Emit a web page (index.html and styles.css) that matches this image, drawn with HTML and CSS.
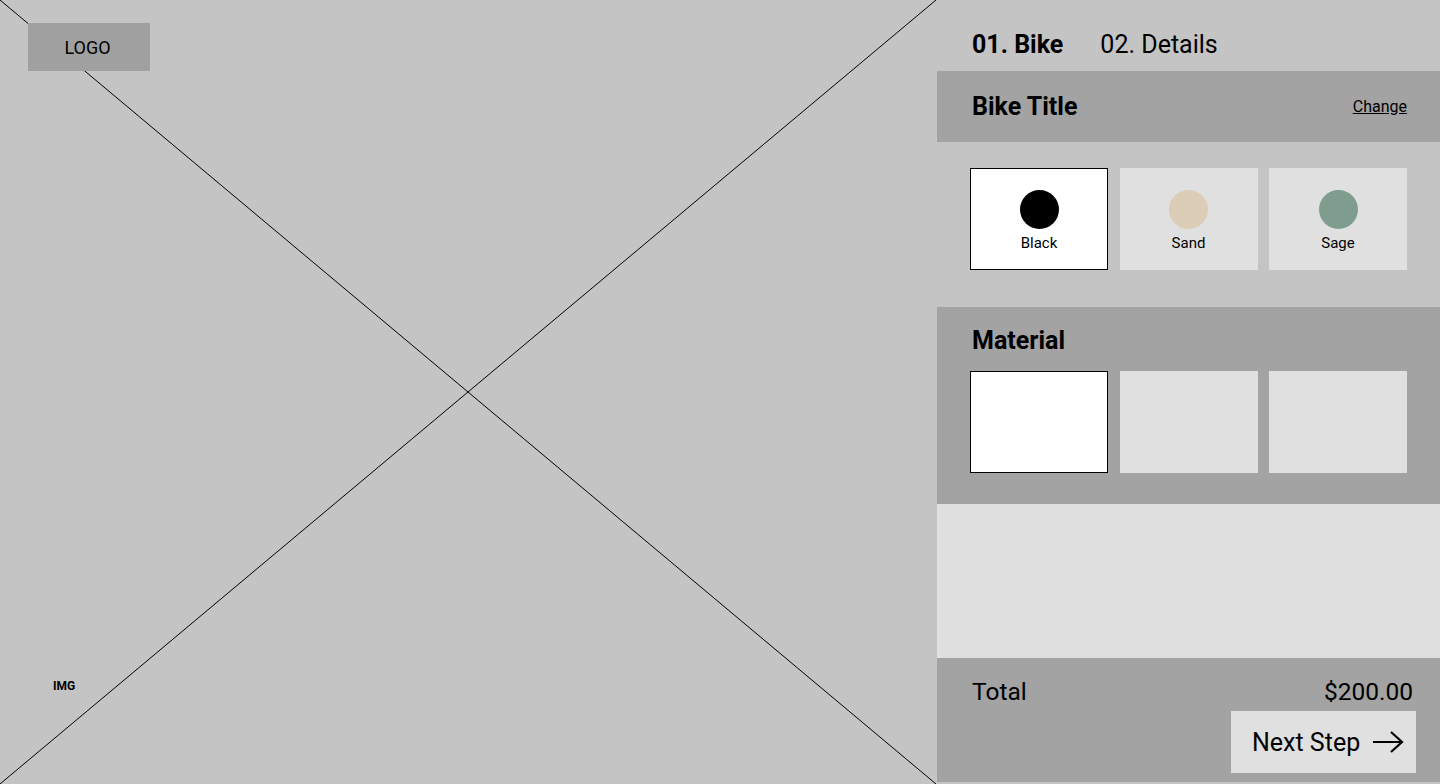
FILE: index.html
```html
<!DOCTYPE html>
<html lang="en">
<head>
    <meta charset="UTF-8">
    <meta name="viewport" content="width=device-width, initial-scale=1.0">
    <title>Bike Configurator</title>
    <link rel="stylesheet" href="styles.css">
</head>
<body>
    <div class="hero">
        <svg class="hero-cross" viewBox="0 0 936 784" preserveAspectRatio="none">
            <line x1="0" y1="0" x2="936" y2="784" stroke="#000" stroke-width="1"/>
            <line x1="936" y1="0" x2="0" y2="784" stroke="#000" stroke-width="1"/>
        </svg>
        <div class="logo">LOGO</div>
        <span class="img-label">IMG</span>
    </div>

    <aside class="panel">
        <nav class="steps">
            <span class="step active">01. Bike</span>
            <span class="step">02. Details</span>
        </nav>

        <div class="bike-title">
            <h2>Bike Title</h2>
            <a href="#" class="change">Change</a>
        </div>

        <div class="colors">
            <div class="option selected">
                <span class="dot" style="background:#000"></span>
                <span class="option-name">Black</span>
            </div>
            <div class="option">
                <span class="dot" style="background:#dbcdb6"></span>
                <span class="option-name">Sand</span>
            </div>
            <div class="option">
                <span class="dot" style="background:#7e9d8f"></span>
                <span class="option-name">Sage</span>
            </div>
        </div>

        <div class="material">
            <h2>Material</h2>
            <div class="options">
                <div class="option selected"></div>
                <div class="option"></div>
                <div class="option"></div>
            </div>
        </div>

        <div class="spacer"></div>

        <div class="summary">
            <div class="total">
                <span>Total</span>
                <span>$200.00</span>
            </div>
            <button class="next">
                Next Step
                <svg width="32" height="24" viewBox="0 0 32 24">
                    <path d="M1 12H30M19 2L30 12L19 22" fill="none" stroke="#000" stroke-width="2.2"/>
                </svg>
            </button>
        </div>
    </aside>
</body>
</html>
```

FILE: styles.css
```css
body {
    margin: 0;
    padding: 0;
    height: 784px;
    display: flex;
    background-color: #c4c4c4;
    overflow: hidden;
    font-family: Roboto, 'Liberation Sans', sans-serif;
    color: #000;
}
.hero {
    position: relative;
    width: 936px;
    height: 784px;
    flex-shrink: 0;
}
.hero-cross {
    position: absolute;
    left: 0;
    top: 0;
    width: 100%;
    height: 100%;
}
.logo {
    position: absolute;
    left: 28px;
    top: 23px;
    width: 122px;
    height: 48px;
    background-color: #a0a0a0;
    display: flex;
    justify-content: center;
    align-items: center;
    padding-right: 3px;
    box-sizing: border-box;
    font-size: 18px;
}
.img-label {
    position: absolute;
    left: 53px;
    top: 679px;
    font-size: 12px;
    font-weight: 700;
}
.panel {
    width: 503px;
    margin-left: 1px;
    display: flex;
    flex-direction: column;
    height: 782px;
}
.steps {
    height: 71px;
    display: flex;
    align-items: center;
    gap: 37px;
    padding: 17px 0 0 35px;
    box-sizing: border-box;
    font-size: 25px;
}
.step.active {
    font-weight: 700;
}
.bike-title {
    height: 71px;
    background-color: #a3a3a3;
    display: flex;
    justify-content: space-between;
    align-items: center;
    padding: 0 33px 0 35px;
}
h2 {
    margin: 0;
    font-size: 25px;
    font-weight: 700;
}
.change {
    color: #000;
    font-size: 16px;
}
.colors {
    height: 165px;
    box-sizing: border-box;
    padding: 26px 0 0 33px;
    display: flex;
    gap: 11.5px;
}
.option {
    width: 138px;
    height: 102px;
    box-sizing: border-box;
    background-color: #e0e0e0;
    display: flex;
    flex-direction: column;
    align-items: center;
    padding-top: 22px;
}
.option.selected {
    background-color: #fff;
    border: 1px solid #000;
    padding-top: 21px;
}
.dot {
    width: 39px;
    height: 39px;
    border-radius: 50%;
}
.option-name {
    margin-top: 5px;
    font-size: 15px;
}
.material {
    height: 197px;
    box-sizing: border-box;
    background-color: #a3a3a3;
    padding: 19px 0 0 35px;
}
.options {
    display: flex;
    gap: 11.5px;
    margin-left: -2px;
    margin-top: 16px;
}
.spacer {
    height: 154px;
    background-color: #dfdfdf;
}
.summary {
    flex: 1;
    background-color: #a3a3a3;
    padding: 19px 27px 0 35px;
    display: flex;
    flex-direction: column;
    align-items: flex-end;
}
.total {
    align-self: stretch;
    display: flex;
    justify-content: space-between;
    font-size: 24.5px;
    line-height: 30px;
}
.next {
    margin-top: 4px;
    margin-right: -3px;
    width: 185px;
    height: 62px;
    border: none;
    background-color: #e0e0e0;
    font-family: inherit;
    font-size: 25px;
    color: #000;
    display: flex;
    align-items: center;
    justify-content: space-between;
    padding: 0 12px 0 21px;
}
```
